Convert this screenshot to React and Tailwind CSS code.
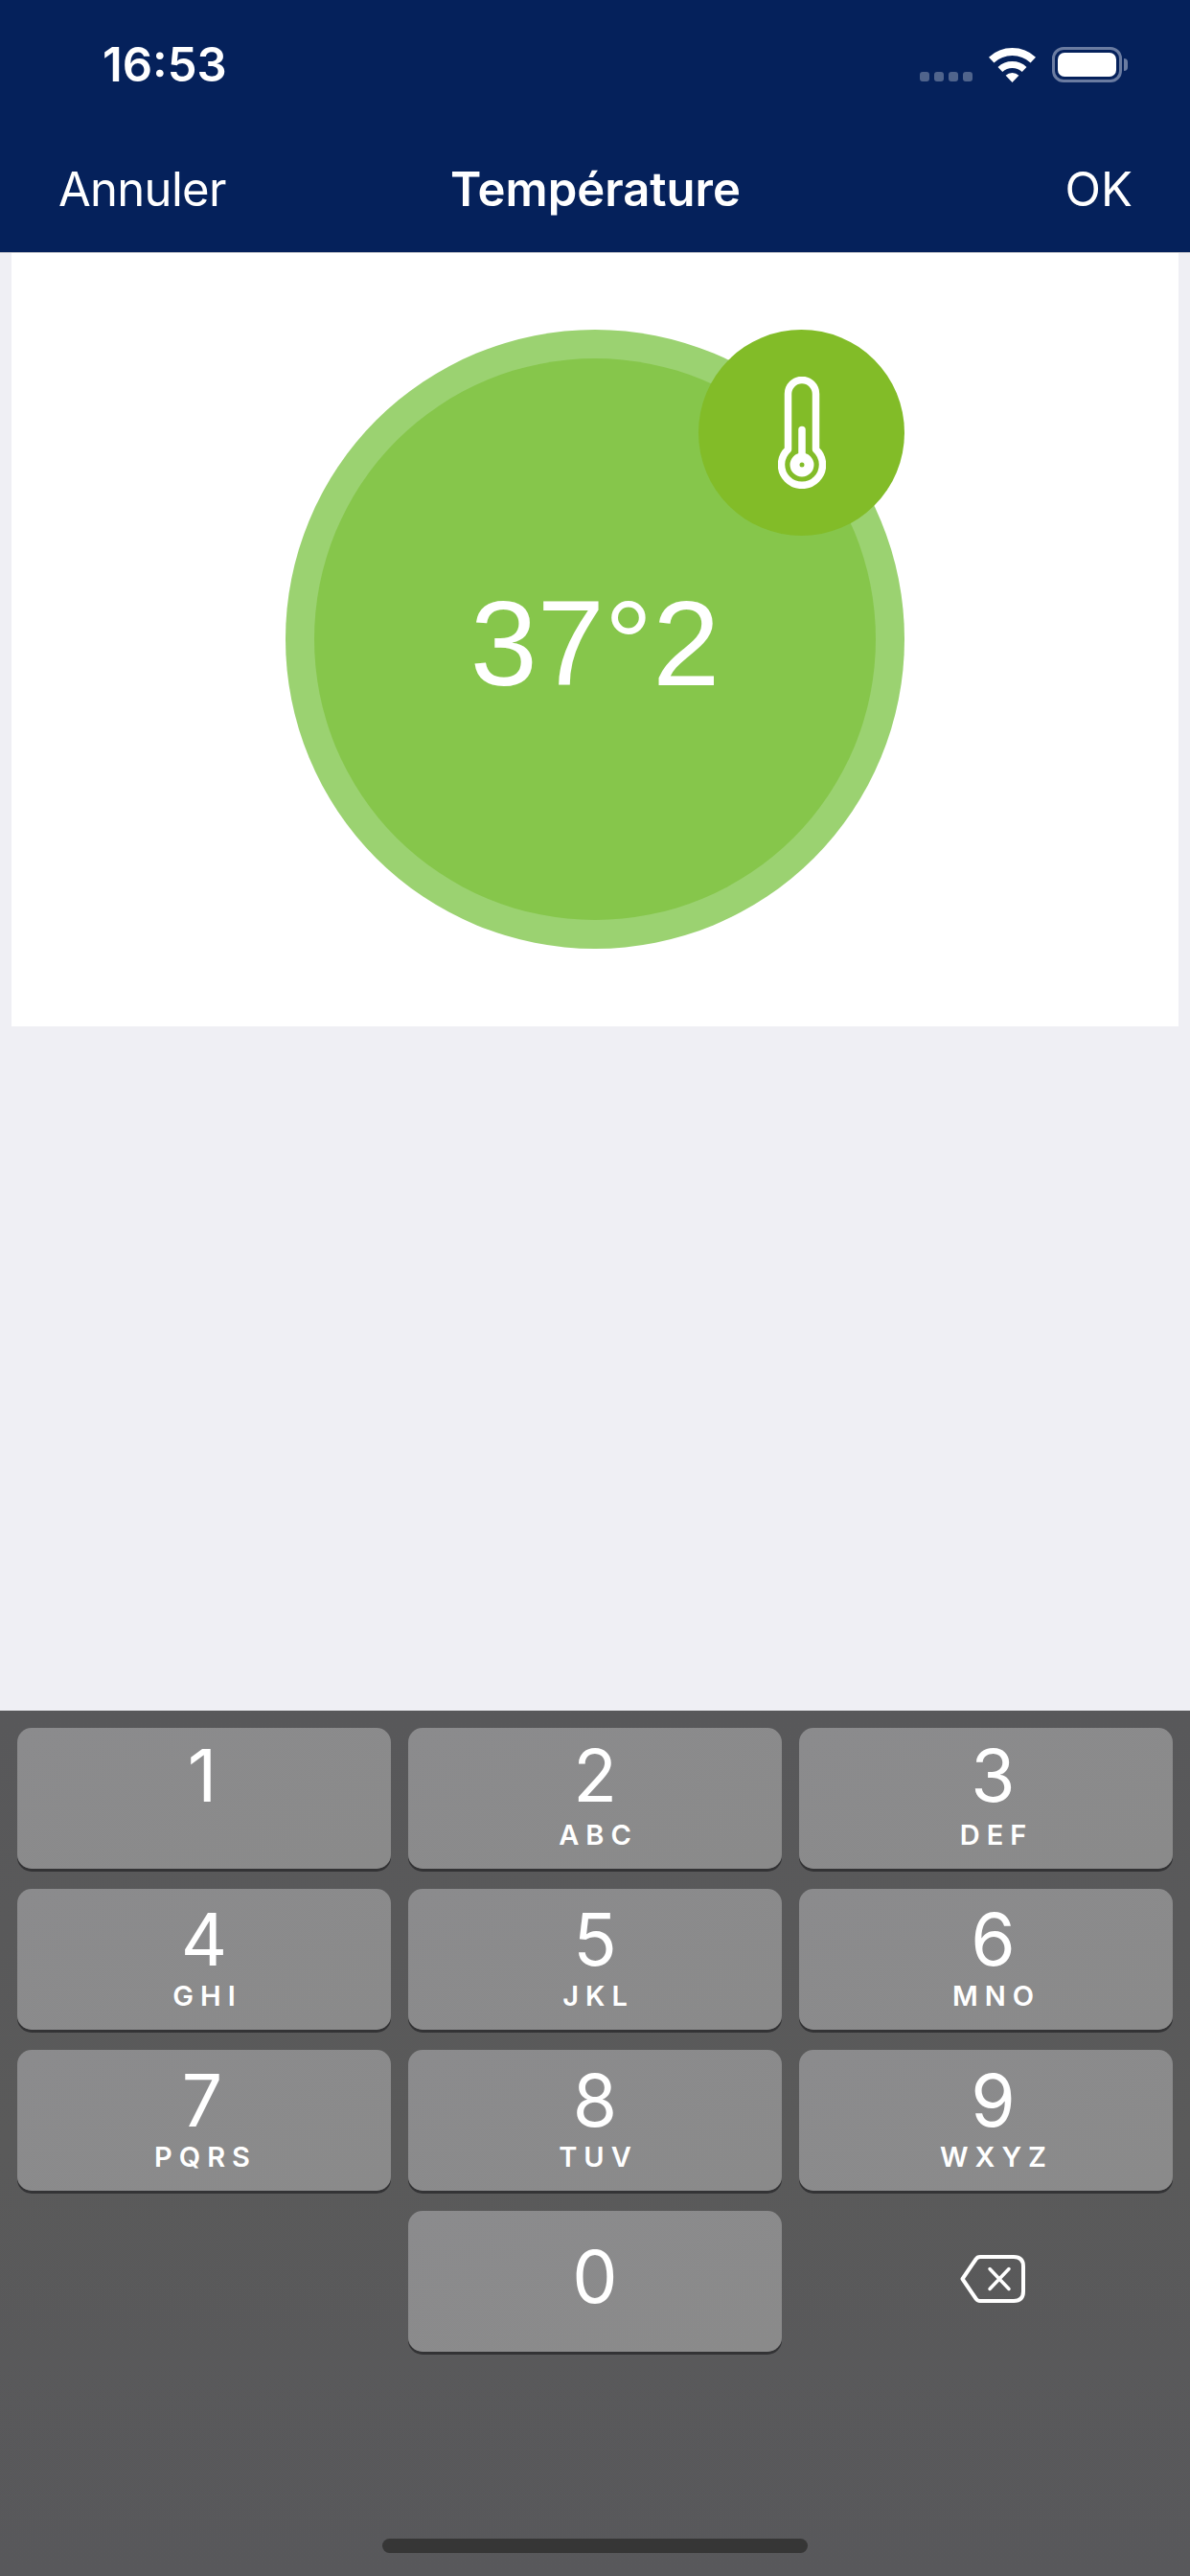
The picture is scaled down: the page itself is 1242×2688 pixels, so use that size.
// side = sideways nudge of the label, down = lower rows sit a bit further from the key top
const keys = [
  { digit: "1", letters: "", side: "pr-[4px]", down: false },
  { digit: "2", letters: "ABC", side: "", down: false },
  { digit: "3", letters: "DEF", side: "pl-[15px]", down: false },
  { digit: "4", letters: "GHI", side: "", down: true },
  { digit: "5", letters: "JKL", side: "", down: true },
  { digit: "6", letters: "MNO", side: "pl-[15px]", down: true },
  { digit: "7", letters: "PQRS", side: "pr-[4px]", down: true },
  { digit: "8", letters: "TUV", side: "", down: true },
  { digit: "9", letters: "WXYZ", side: "pl-[15px]", down: true },
];

const Key = ({ digit, letters, side, down }) => (
  <div className={`h-[147px] rounded-[15px] bg-linear-to-br from-[#8b8b8d] to-[#8a8a8a] shadow-[0_3px_0_#333335] flex flex-col items-center text-white ${side}`}>
    <span className={`${down ? "mt-[17px]" : "mt-[14px]"} h-[72px] text-[75px] leading-[72px] font-normal`}>{digit}</span>
    {letters && (
      <span className={`${down ? "mt-[5px]" : "mt-[8px]"} text-[29px] leading-[36px] font-semibold tracking-[7px] pl-[7px]`}>{letters}</span>
    )}
  </div>
);

const Wifi = () => (
  <svg width="49" height="36" viewBox="0 0 49 36" fill="none" stroke="white" className="block">
    <path d="M2.7 12.6 A32 32 0 0 1 46.3 12.6" strokeWidth="8" />
    <path d="M11.9 22.5 A18.5 18.5 0 0 1 37.1 22.5" strokeWidth="7" />
    <path d="M24.5 36 L17.6 28.8 A10 10 0 0 1 31.4 28.8 Z" fill="white" stroke="none" />
  </svg>
);

const Thermometer = () => (
  <svg width="50" height="117" viewBox="0 0 50 117" fill="none" stroke="white" className="block">
    <path
      d="M10.5 76 V18 A14.5 14.5 0 0 1 39.5 18 V76 A21.5 21.5 0 1 1 10.5 76 Z"
      strokeWidth="7.5"
      strokeLinejoin="round"
    />
    <path d="M25 55.5 V84" strokeWidth="7.5" strokeLinecap="round" />
    <circle cx="25" cy="92" r="7.5" strokeWidth="10" />
  </svg>
);

const Backspace = () => (
  <svg width="68" height="50" viewBox="0 0 68 50" fill="none" stroke="white" className="block">
    <path
      d="M2.5 25 L16.5 4.5 Q18 2 21 2 H56 Q66 2 66 12 V38 Q66 48 56 48 H21 Q18 48 16.5 45.5 Z"
      strokeWidth="4"
      strokeLinejoin="round"
    />
    <path d="M31 14.5 L51 35.5 M51 14.5 L31 35.5" strokeWidth="3.5" strokeLinecap="round" />
  </svg>
);

export default function App() {
  return (
    <div className="w-[1242px] h-[2688px] flex flex-col bg-[#efeff4] font-['Inter',sans-serif] overflow-hidden">
      {/* status bar */}
      <div className="h-[132px] bg-[#05215b] flex items-start justify-between pl-[107px] pr-[65px] pt-[49px] text-white">
        <span className="text-[49px] leading-[37px] font-semibold">16:53</span>
        <div className="flex items-end">
          <div className="flex gap-[5px] mb-px">
            <span className="w-[10px] h-[10px] rounded-[3px] bg-white/30" />
            <span className="w-[10px] h-[10px] rounded-[3px] bg-white/30" />
            <span className="w-[10px] h-[10px] rounded-[3px] bg-white/30" />
            <span className="w-[10px] h-[10px] rounded-[3px] bg-white/30" />
          </div>
          <div className="ml-[17px]">
            <Wifi />
          </div>
          <div className="ml-[17px] flex items-center">
            <div className="w-[73px] h-[37px] rounded-[12px] border-[3px] border-[#6b7ca1] p-[3px]">
              <div className="w-full h-full rounded-[7px] bg-white" />
            </div>
            <span className="ml-[2px] w-[4px] h-[13px] rounded-r-full bg-[#6b7ca1]" />
          </div>
        </div>
      </div>

      {/* nav bar */}
      <div className="h-[132px] bg-[#05215b] border-b border-[#b5b8c2] grid grid-cols-[1fr_auto_1fr] items-start pl-[61px] pr-[60px] pt-[44px] text-white text-[49px] leading-[44px]">
        <span className="tracking-[-0.7px]">Annuler</span>
        <span className="font-semibold">Température</span>
        <span className="justify-self-end">OK</span>
      </div>

      {/* gauge card */}
      <div className="mx-[12px] h-[807px] bg-white flex justify-center pt-[80px] shrink-0">
        <div className="relative w-[646px] h-[646px] rounded-full bg-[#9bd271] flex items-center justify-center">
          <div className="w-[586px] h-[586px] rounded-full bg-[#86c64b] flex items-center justify-center">
            <span className="mt-[9px] text-white text-[126px] leading-none font-['Liberation_Sans',sans-serif]">37°2</span>
          </div>
          <div className="absolute top-0 right-0 w-[215px] h-[215px] rounded-full bg-[#82bc28] flex items-center justify-center">
            <Thermometer />
          </div>
        </div>
      </div>

      <div className="flex-1" />

      {/* keypad */}
      <div className="relative h-[903px] bg-linear-to-b from-[#58585a] via-[#5a5a5a] to-[#58585b] px-[18px] pt-[18px]">
        <div className="grid grid-cols-3 gap-x-[18px] gap-y-[21px]">
          {keys.map((k) => (
            <Key key={k.digit} {...k} />
          ))}
          <div />
          <div className="h-[147px] rounded-[15px] bg-linear-to-br from-[#8b8b8d] to-[#8a8a8a] shadow-[0_3px_0_#333335] flex items-center justify-center pb-[10px] text-white text-[75px] leading-none">
            0
          </div>
          <div className="flex items-center justify-center pl-[14px] pb-[6px]">
            <Backspace />
          </div>
        </div>
        <div className="absolute left-[399px] bottom-[24px] w-[444px] h-[15px] rounded-full bg-[#363636]" />
      </div>
    </div>
  );
}
